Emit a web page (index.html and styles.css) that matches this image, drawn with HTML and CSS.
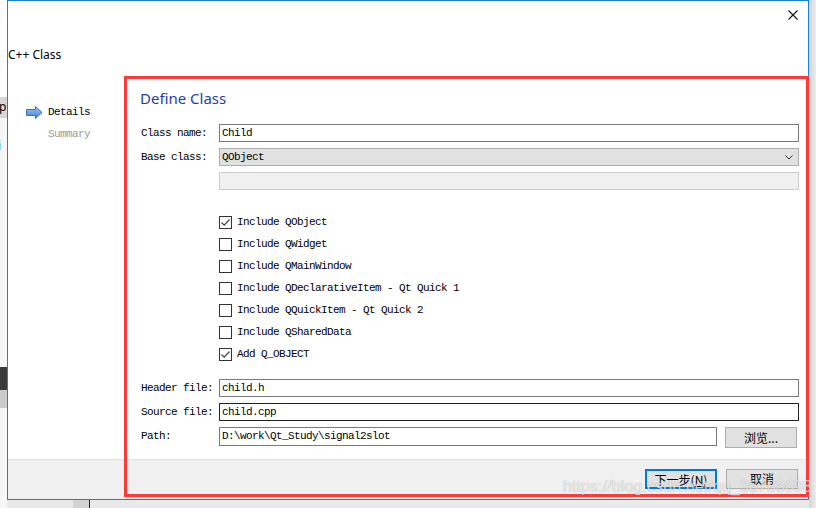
FILE: index.html
```html
<!DOCTYPE html>
<html lang="zh-CN">
<head>
    <meta charset="UTF-8">
    <title>C++ Class</title>
    <link rel="stylesheet" href="styles.css">
</head>
<body>
    <div class="desktop">
        <div class="side-strip">
            <div class="strip-top"></div>
            <div class="strip-tab">p</div>
            <div class="strip-gap">i</div>
            <div class="strip-dark"></div>
            <div class="strip-light"></div>
        </div>

        <div class="dialog">
            <div class="titlebar">
                <svg class="close-icon" width="10" height="10" viewBox="0 0 10 10">
                    <path d="M0.5 0.5 L9.5 9.5 M9.5 0.5 L0.5 9.5" stroke="#111" stroke-width="1.1" fill="none"/>
                </svg>
            </div>
            <div class="wizard-title">C++ Class</div>

            <div class="wizard-body">
                <div class="nav">
                    <div class="nav-item current">
                        <svg class="nav-arrow" width="17" height="13" viewBox="0 0 17 13">
                            <defs>
                                <linearGradient id="arrowFill" x1="0" y1="0" x2="0" y2="1">
                                    <stop offset="0" stop-color="#9cc6f5"/>
                                    <stop offset="1" stop-color="#3c82d8"/>
                                </linearGradient>
                            </defs>
                            <path d="M0.5 3.5 H9.5 V0.5 L16 6.5 L9.5 12.5 V9.5 H0.5 Z" fill="url(#arrowFill)" stroke="#3f6fb8" stroke-width="1"/>
                        </svg>
                        <span>Details</span>
                    </div>
                    <div class="nav-item muted"><span>Summary</span></div>
                </div>

                <div class="page">
                    <h1 class="page-title">Define Class</h1>

                    <div class="field">
                        <label>Class name:</label>
                        <div class="text-box">Child</div>
                    </div>
                    <div class="field">
                        <label>Base class:</label>
                        <div class="combo">
                            <span>QObject</span>
                            <svg width="8" height="5" viewBox="0 0 8 5">
                                <path d="M0.5 0.5 L4 4 L7.5 0.5" stroke="#333" stroke-width="1" fill="none"/>
                            </svg>
                        </div>
                    </div>
                    <div class="field">
                        <label></label>
                        <div class="blank-box"></div>
                    </div>

                    <div class="checks">
                        <div class="check-row"><span class="check on"><svg width="11" height="11" viewBox="0 0 11 11"><path d="M1.5 5.5 L4.2 8.2 L9.5 2.5" stroke="#444" stroke-width="1.2" fill="none"/></svg></span>Include QObject</div>
                        <div class="check-row"><span class="check"></span>Include QWidget</div>
                        <div class="check-row"><span class="check"></span>Include QMainWindow</div>
                        <div class="check-row"><span class="check"></span>Include QDeclarativeItem - Qt Quick 1</div>
                        <div class="check-row"><span class="check"></span>Include QQuickItem - Qt Quick 2</div>
                        <div class="check-row"><span class="check"></span>Include QSharedData</div>
                        <div class="check-row"><span class="check on"><svg width="11" height="11" viewBox="0 0 11 11"><path d="M1.5 5.5 L4.2 8.2 L9.5 2.5" stroke="#444" stroke-width="1.2" fill="none"/></svg></span>Add Q_OBJECT</div>
                    </div>

                    <div class="field">
                        <label>Header file:</label>
                        <div class="text-box">child.h</div>
                    </div>
                    <div class="field">
                        <label>Source file:</label>
                        <div class="text-box focused">child.cpp</div>
                    </div>
                    <div class="field path-row">
                        <label>Path:</label>
                        <div class="text-box">D:\work\Qt_Study\signal2slot</div>
                        <button class="btn browse">浏览...</button>
                    </div>
                </div>
            </div>

            <div class="footer">
                <button class="btn default">下一步(<u>N</u>)</button>
                <button class="btn">取消</button>
            </div>
        </div>

        <div class="shadow"></div>
    </div>

    <!-- annotation drawn over the screenshot -->
    <div class="highlight"></div>
    <div class="watermark">https://blog.csdn.net/qq_36788698</div>
    <div class="taskbar-bit"></div>
</body>
</html>
```

FILE: styles.css
```css
body {
    margin: 0;
    padding: 0;
    width: 816px;
    height: 508px;
    overflow: hidden;
    background: #e9e9e9;
    position: relative;
    font-family: "Liberation Mono", "DejaVu Sans Mono", monospace;
}
.desktop {
    display: flex;
    height: 508px;
}
.side-strip {
    width: 7px;
    display: flex;
    flex-direction: column;
    background: #f7f7f7;
    overflow: hidden;
    font-family: "Noto Sans", sans-serif;
    font-size: 12px;
    color: #000;
}
.strip-top {
    height: 97px;
    background: #fdfdfd;
}
.strip-tab {
    height: 21px;
    line-height: 20px;
    background: #d6d6d6;
    text-indent: -1px;
}
.strip-gap {
    height: 249px;
    line-height: 56px;
    text-indent: -2px;
}
.strip-dark {
    height: 23px;
    background: #3a3a3a;
}
.strip-light {
    height: 18px;
    background: #cbcbcb;
}

.dialog {
    width: 802px;
    height: 500px;
    box-sizing: border-box;
    border: 1px solid #1883d7;
    background: #fff;
    display: flex;
    flex-direction: column;
}
.shadow {
    width: 7px;
    height: 508px;
    background: linear-gradient(to right, #d4d4d4, #ececec);
}

.titlebar {
    height: 30px;
    display: flex;
    justify-content: flex-end;
    align-items: flex-start;
}
.close-icon {
    margin-top: 9px;
    margin-right: 10px;
}
.wizard-title {
    font-family: "Noto Sans", "Open Sans", sans-serif;
    font-size: 12px;
    line-height: 16px;
    margin-top: 16px;
    color: #000;
}

.wizard-body {
    flex: 1;
    display: flex;
    margin-top: 17px;
}
.nav {
    width: 116px;
    padding-top: 24px;
    box-sizing: border-box;
}
.nav-item {
    display: flex;
    align-items: center;
    height: 16px;
    font-size: 11px;
    letter-spacing: -0.6px;
    padding-left: 40px;
    margin-bottom: 6px;
    color: #000;
}
.nav-item.current {
    padding-left: 18px;
}
.nav-arrow {
    margin-right: 5px;
}
.nav-item.muted {
    color: #9a9a9a;
}

.page {
    flex: 1;
    padding: 8px 9px 0 17px;
}
.page-title {
    margin: 0 0 16px -1px;
    font-family: "Noto Sans", "Open Sans", sans-serif;
    font-weight: normal;
    font-size: 15px;
    line-height: 20px;
    color: #1f3ea6;
}

.field {
    display: flex;
    align-items: center;
    margin-bottom: 6px;
    font-size: 11px;
    letter-spacing: -0.6px;
}
.field label {
    width: 78px;
    flex: none;
    color: #000;
}
.text-box {
    flex: 1;
    height: 18px;
    box-sizing: border-box;
    border: 1px solid #7a7a7a;
    padding-left: 2px;
    line-height: 16px;
    background: #fff;
}
.text-box.focused {
    border-color: #222;
}
.combo {
    flex: 1;
    height: 18px;
    box-sizing: border-box;
    border: 1px solid #adadad;
    background: #e1e1e1;
    padding: 0 5px 0 2px;
    line-height: 16px;
    display: flex;
    justify-content: space-between;
    align-items: center;
}
.blank-box {
    flex: 1;
    height: 18px;
    box-sizing: border-box;
    border: 1px solid #cccccc;
    background: #f0f0f0;
}

.checks {
    margin: 21px 0 14px 78px;
    font-size: 11px;
    letter-spacing: -0.6px;
}
.check-row {
    display: flex;
    align-items: center;
    height: 22px;
}
.check {
    width: 13px;
    height: 13px;
    box-sizing: border-box;
    border: 1px solid #333;
    background: #fff;
    margin-right: 5px;
    display: flex;
    align-items: center;
    justify-content: center;
}

.path-row {
    align-items: flex-start;
}
.path-row label {
    line-height: 18px;
}
.path-row .text-box {
    height: 19px;
    margin-right: 8px;
}

.btn {
    height: 21px;
    width: 72px;
    box-sizing: border-box;
    border: 1px solid #adadad;
    background: #e1e1e1;
    font-family: "Noto Sans CJK SC", sans-serif;
    font-size: 12px;
    letter-spacing: 0;
    line-height: 18px;
    padding: 0;
    color: #000;
}
.browse {
    margin-right: 2px;
}
.btn.default {
    border: 2px solid #0078d7;
}

.footer {
    height: 40px;
    box-sizing: border-box;
    border-top: 1px solid #dfdfdf;
    background: #f0f0f0;
    display: flex;
    justify-content: flex-end;
    gap: 9px;
    padding: 9px 10px 0 0;
}
.footer .btn {
    height: 20px;
}

.highlight {
    position: absolute;
    left: 124px;
    top: 76px;
    width: 685px;
    height: 421px;
    box-sizing: border-box;
    border: 3px solid #fc3a3a;
}
.watermark {
    position: absolute;
    left: 563px;
    top: 478px;
    font-family: "Liberation Sans", Arial, sans-serif;
    font-size: 16px;
    color: rgba(255, 255, 255, 0.75);
    text-shadow: 0 0 1px rgba(0, 0, 0, 0.35);
    letter-spacing: 0.1px;
}
.taskbar-bit {
    position: absolute;
    left: 73px;
    top: 500px;
    width: 16px;
    height: 8px;
    background: #d2d2d2;
    border-right: 1px solid #222;
}
```
